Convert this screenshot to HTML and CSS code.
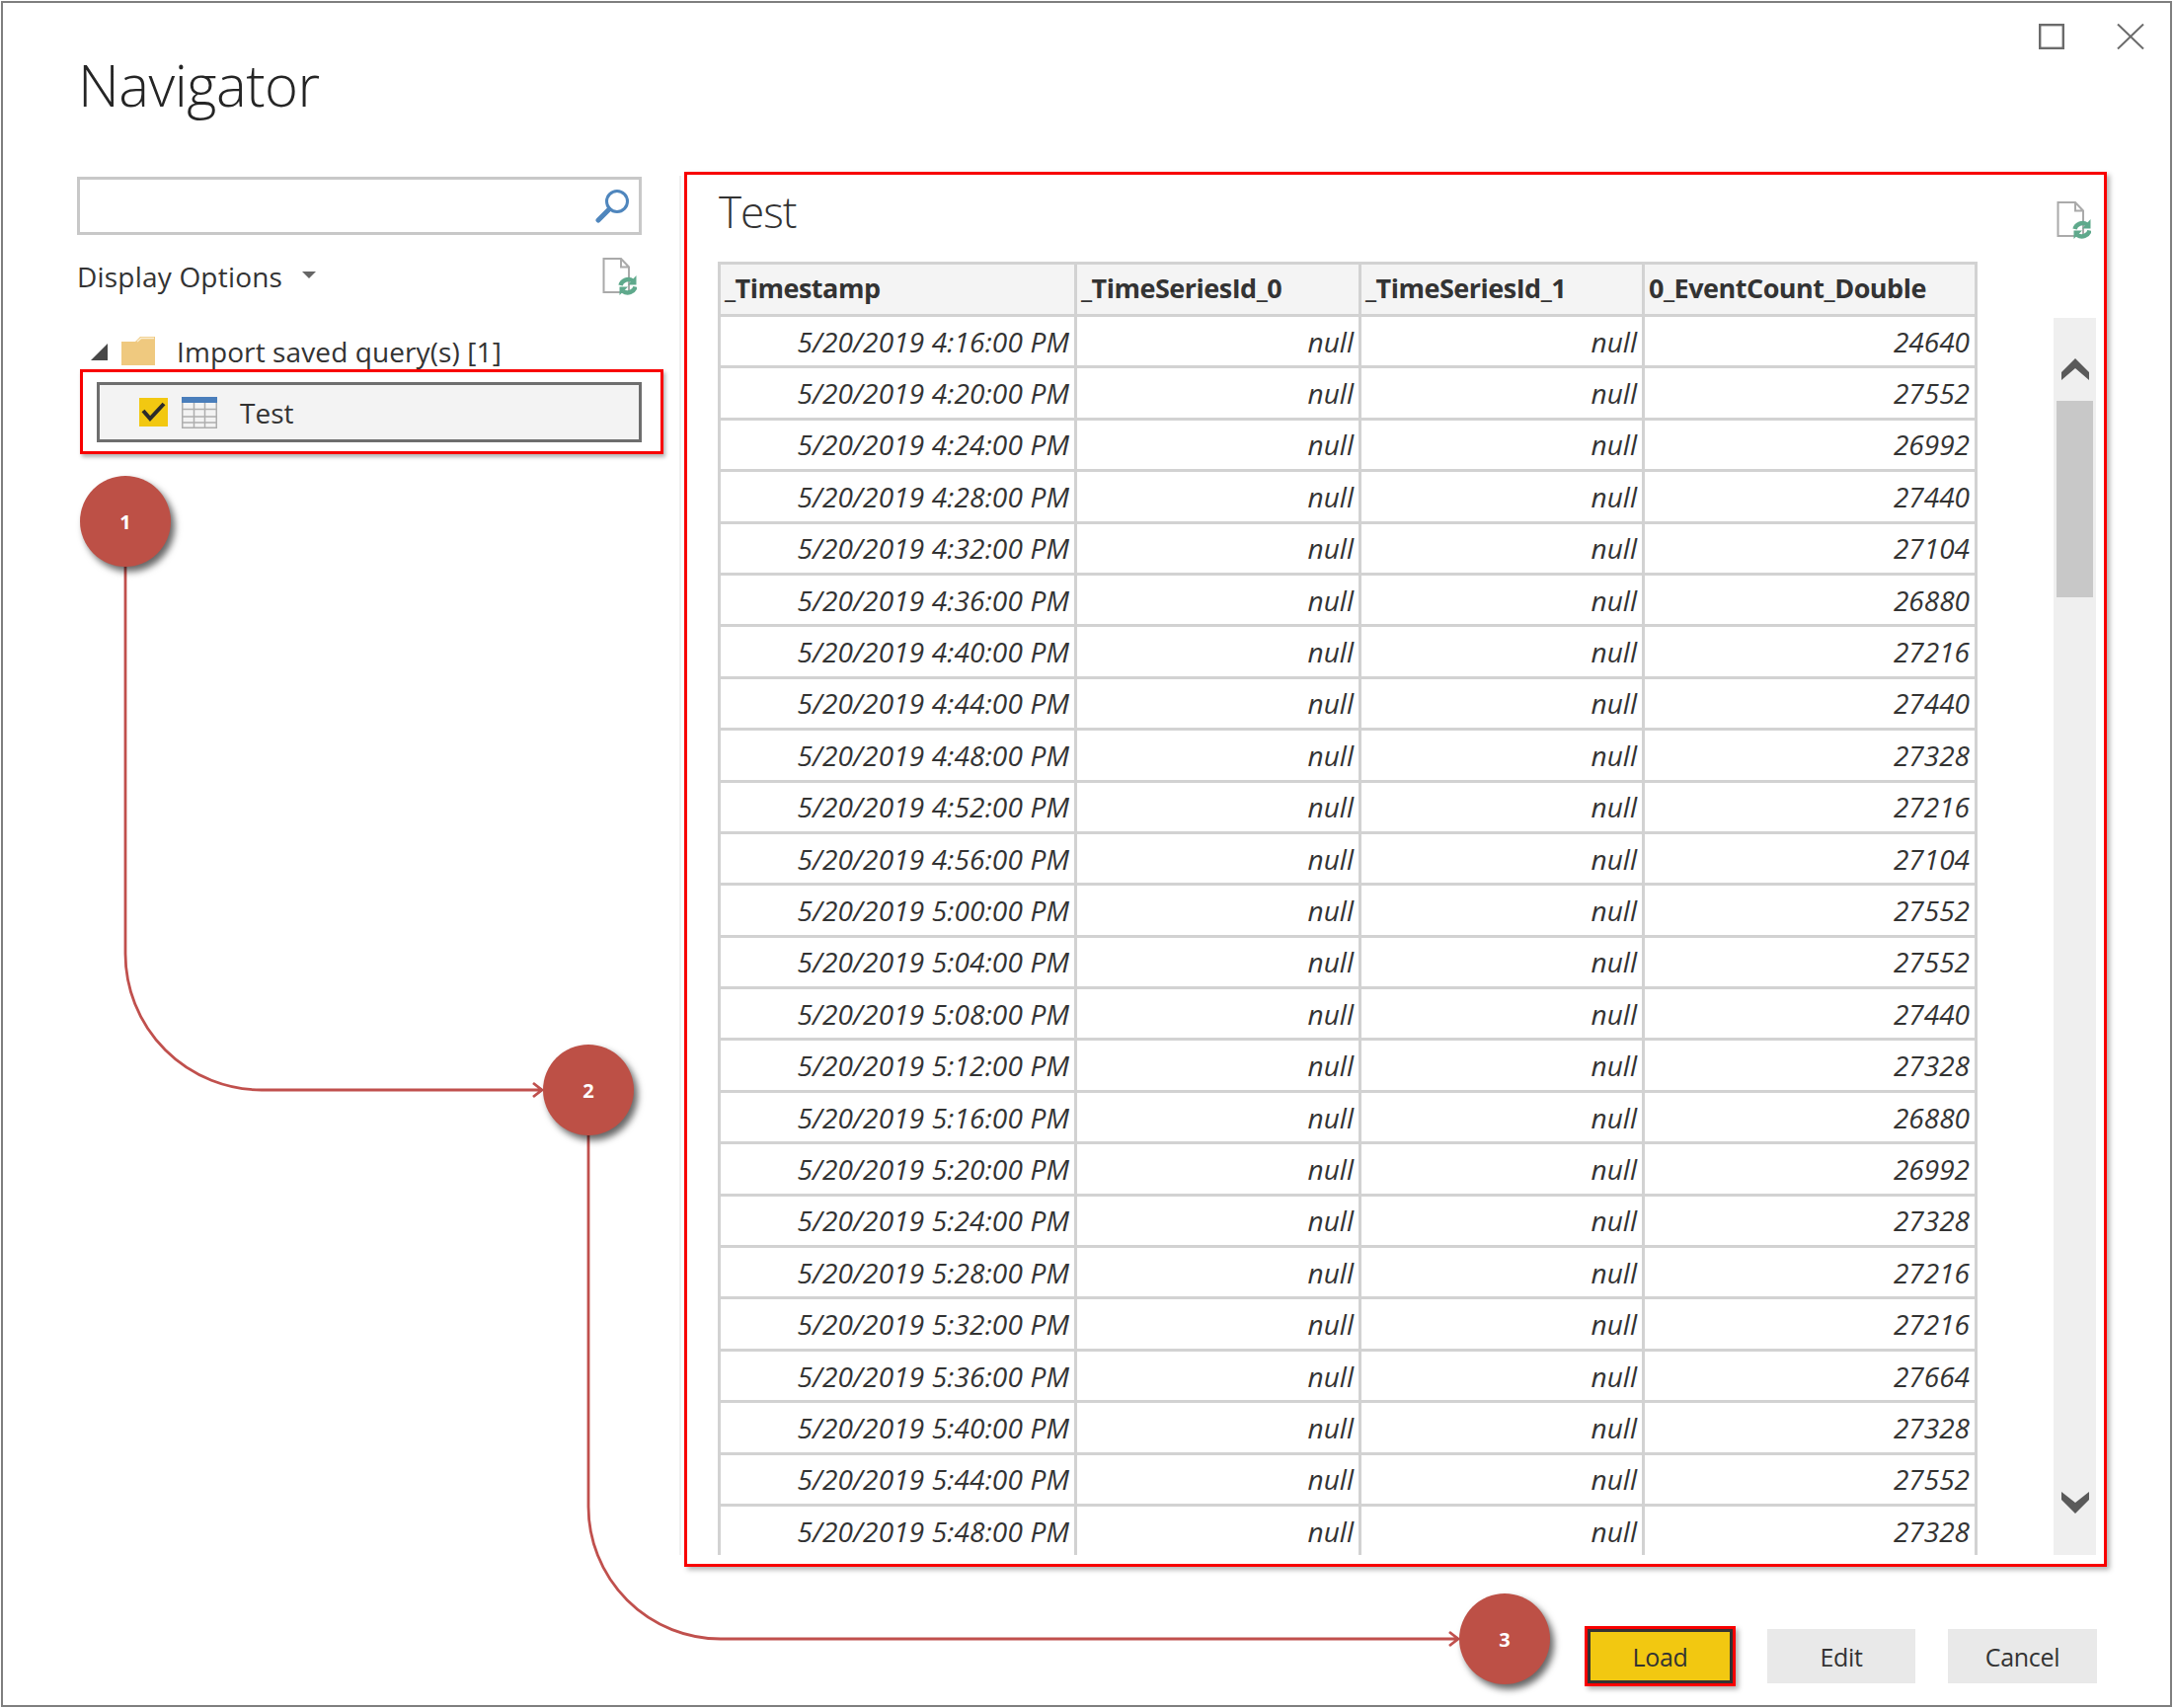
FILE: index.html
```html
<!DOCTYPE html>
<html lang="en">
<head>
  <meta charset="UTF-8">
  <title>Navigator</title>
  <link rel="stylesheet" href="styles.css">
</head>
<body>
  <div class="dialog">
    <div class="window-controls">
      <svg class="win-icon" width="26" height="26" viewBox="0 0 26 26"><rect x="1.2" y="1.2" width="23.6" height="23.6" fill="none" stroke="#6b6b6b" stroke-width="2.4"/></svg>
      <svg class="win-icon" width="28" height="26" viewBox="0 0 28 26"><path d="M1 0.5 L27 25.5 M27 0.5 L1 25.5" fill="none" stroke="#6b6b6b" stroke-width="2"/></svg>
    </div>
    <h1 class="nav-title">Navigator</h1>

    <div class="content">
      <div class="sidebar">
        <div class="search-box">
          <svg width="35" height="35" viewBox="0 0 35 35"><circle cx="22" cy="13" r="10.5" fill="none" stroke="#4f86bd" stroke-width="3"/><path d="M14 21 L3 32" fill="none" stroke="#4f86bd" stroke-width="5" stroke-linecap="round"/></svg>
        </div>
        <div class="options-row">
          <span class="options-label">Display Options</span>
          <span class="caret"></span>
          <svg class="refresh-icon" width="35" height="38" viewBox="0 0 35 38"><use href="#doc-refresh"/></svg>
        </div>
        <div class="tree-folder">
          <span class="tree-arrow"></span>
          <svg width="35" height="30" viewBox="0 0 35 30"><path d="M0 5 L14 5 L19 0 L34 0 L34 29 L0 29 Z" fill="#efc97f"/><path d="M16 5 L20 1.5 L33 1.5" fill="none" stroke="#fbeed2" stroke-width="1.5"/></svg>
          <span class="folder-name">Import saved query(s) [1]</span>
        </div>
        <div class="tree-highlight">
          <div class="tree-item">
            <span class="check">
              <svg width="29" height="29" viewBox="0 0 29 29"><path d="M4 13 L11 21 L25 6" fill="none" stroke="#2b2b2b" stroke-width="4"/></svg>
            </span>
            <svg class="table-icon" width="36" height="32" viewBox="0 0 36 32">
              <rect x="0" y="0" width="36" height="6" fill="#4a7ebb"/>
              <path d="M0.75 6 V31.25 H35.25 V6 M0.75 12.5 H35.25 M0.75 20 H35.25 M0.75 26 H35.25 M12.5 6 V31 M23.5 6 V31" fill="none" stroke="#aeaeae" stroke-width="1.5"/>
            </svg>
            <span class="item-name">Test</span>
          </div>
        </div>
      </div>

      <div class="preview">
        <div class="preview-head">
          <h2 class="preview-title">Test</h2>
          <svg class="refresh-icon" width="35" height="38" viewBox="0 0 35 38"><use href="#doc-refresh"/></svg>
        </div>
        <div class="preview-body">
          <div class="data-table">
            <div class="row head"><div>_Timestamp</div><div>_TimeSeriesId_0</div><div>_TimeSeriesId_1</div><div>0_EventCount_Double</div></div>
            <div class="row"><div>5/20/2019 4:16:00 PM</div><div>null</div><div>null</div><div>24640</div></div>
            <div class="row"><div>5/20/2019 4:20:00 PM</div><div>null</div><div>null</div><div>27552</div></div>
            <div class="row"><div>5/20/2019 4:24:00 PM</div><div>null</div><div>null</div><div>26992</div></div>
            <div class="row"><div>5/20/2019 4:28:00 PM</div><div>null</div><div>null</div><div>27440</div></div>
            <div class="row"><div>5/20/2019 4:32:00 PM</div><div>null</div><div>null</div><div>27104</div></div>
            <div class="row"><div>5/20/2019 4:36:00 PM</div><div>null</div><div>null</div><div>26880</div></div>
            <div class="row"><div>5/20/2019 4:40:00 PM</div><div>null</div><div>null</div><div>27216</div></div>
            <div class="row"><div>5/20/2019 4:44:00 PM</div><div>null</div><div>null</div><div>27440</div></div>
            <div class="row"><div>5/20/2019 4:48:00 PM</div><div>null</div><div>null</div><div>27328</div></div>
            <div class="row"><div>5/20/2019 4:52:00 PM</div><div>null</div><div>null</div><div>27216</div></div>
            <div class="row"><div>5/20/2019 4:56:00 PM</div><div>null</div><div>null</div><div>27104</div></div>
            <div class="row"><div>5/20/2019 5:00:00 PM</div><div>null</div><div>null</div><div>27552</div></div>
            <div class="row"><div>5/20/2019 5:04:00 PM</div><div>null</div><div>null</div><div>27552</div></div>
            <div class="row"><div>5/20/2019 5:08:00 PM</div><div>null</div><div>null</div><div>27440</div></div>
            <div class="row"><div>5/20/2019 5:12:00 PM</div><div>null</div><div>null</div><div>27328</div></div>
            <div class="row"><div>5/20/2019 5:16:00 PM</div><div>null</div><div>null</div><div>26880</div></div>
            <div class="row"><div>5/20/2019 5:20:00 PM</div><div>null</div><div>null</div><div>26992</div></div>
            <div class="row"><div>5/20/2019 5:24:00 PM</div><div>null</div><div>null</div><div>27328</div></div>
            <div class="row"><div>5/20/2019 5:28:00 PM</div><div>null</div><div>null</div><div>27216</div></div>
            <div class="row"><div>5/20/2019 5:32:00 PM</div><div>null</div><div>null</div><div>27216</div></div>
            <div class="row"><div>5/20/2019 5:36:00 PM</div><div>null</div><div>null</div><div>27664</div></div>
            <div class="row"><div>5/20/2019 5:40:00 PM</div><div>null</div><div>null</div><div>27328</div></div>
            <div class="row"><div>5/20/2019 5:44:00 PM</div><div>null</div><div>null</div><div>27552</div></div>
            <div class="row"><div>5/20/2019 5:48:00 PM</div><div>null</div><div>null</div><div>27328</div></div>
          </div>
          <div class="scrollbar">
            <svg class="scroll-up" width="28" height="23" viewBox="0 0 28 23"><polygon points="0,14 14,0 28,14 28,22 14,10 0,22" fill="#5a5a5a"/></svg>
            <div class="scroll-thumb"></div>
            <svg class="scroll-down" width="28" height="22" viewBox="0 0 28 22"><polygon points="0,0 14,11 28,0 28,8 14,22 0,8" fill="#5a5a5a"/></svg>
          </div>
        </div>
      </div>
    </div>

    <div class="footer">
      <button type="button" class="btn btn-load">Load</button>
      <button type="button" class="btn">Edit</button>
      <button type="button" class="btn btn-cancel">Cancel</button>
    </div>

    <!-- annotations drawn over the dialog -->
    <svg class="connectors" width="2202" height="1730" viewBox="0 0 2202 1730">
      <defs>
        <g id="doc-refresh">
          <path d="M1.5 1 H19 L27 9.5 V35 H1.5 Z M19 1 V9.5 H27" fill="#fff" stroke="#aaaaaa" stroke-width="2"/>
          <path d="M18.5 28 A8 7.5 0 0 1 31 23.5" fill="none" stroke="#5fa98c" stroke-width="4.4"/>
          <path d="M34.5 18 V27.5 H26 Z" fill="#5fa98c"/>
          <path d="M33.5 29.5 A8 7.5 0 0 1 21 34" fill="none" stroke="#5fa98c" stroke-width="4.4"/>
          <path d="M17.5 38 V29.5 H26 Z" fill="#5fa98c"/>
        </g>
      </defs>
      <path d="M127 574 V966 A138 138 0 0 0 265 1104 H549 M540 1097 L549 1104 L540 1111" />
      <path d="M596 1150 V1526 A134 134 0 0 0 730 1660 H1477 M1468 1653 L1477 1660 L1468 1667" />
    </svg>
    <div class="step step-1">1</div>
    <div class="step step-2">2</div>
    <div class="step step-3">3</div>
  </div>
</body>
</html>
```

FILE: styles.css
```css
* {
  box-sizing: border-box;
}
body {
  margin: 0;
  background-color: #ffffff;
  font-family: "Open Sans", "Noto Sans", sans-serif;
  color: #333333;
}
.dialog {
  position: relative;
  width: 2199px;
  height: 1728px;
  margin: 1px 2px 1px 1px;
  border: 2px solid #7f7f7f;
  padding-top: 21px;
  display: flex;
  flex-direction: column;
}

/* title area */
.window-controls {
  display: flex;
  justify-content: flex-end;
  gap: 53px;
  height: 26px;
  padding-right: 26px;
}
.nav-title {
  margin: 0;
  height: 125px;
  padding: 0 0 0 76px;
  font-size: 58px;
  font-weight: 300;
  line-height: 72px;
  letter-spacing: -0.5px;
  color: #252525;
}

.content {
  display: flex;
  height: 1410px;
}

/* left pane */
.sidebar {
  width: 691px;
  padding-left: 75px;
}
.search-box {
  width: 572px;
  height: 59px;
  margin-top: 4px;
  border: 3px solid #c8c8c8;
  display: flex;
  justify-content: flex-end;
  align-items: center;
  padding-right: 9px;
}
.options-row {
  display: flex;
  align-items: center;
  width: 572px;
  height: 60px;
  margin-top: 12px;
}
.options-label {
  font-size: 28px;
  letter-spacing: 0.2px;
}
.caret {
  width: 0;
  height: 0;
  margin-left: 20px;
  margin-top: -3px;
  border-left: 7px solid transparent;
  border-right: 7px solid transparent;
  border-top: 7px solid #666666;
}
.options-row .refresh-icon {
  margin-left: auto;
  margin-right: 5px;
}
.tree-folder {
  display: flex;
  align-items: center;
  height: 30px;
  margin-top: 31px;
  padding-left: 14px;
}
.tree-arrow {
  width: 0;
  height: 0;
  margin-right: 14px;
  border-bottom: 17px solid #474747;
  border-left: 17px solid transparent;
}
.folder-name {
  margin-left: 21px;
  font-size: 28px;
  letter-spacing: 0.1px;
  white-space: nowrap;
}
.tree-highlight {
  width: 591px;
  height: 86px;
  margin: 3px 0 0 3px;
  padding: 10px 19px 9px 14px;
  border: 3px solid #f80000;
  box-shadow: 2px 3px 4px rgba(0, 0, 0, 0.3);
}
.tree-item {
  display: flex;
  align-items: center;
  height: 61px;
  padding-left: 40px;
  background: #f3f3f3;
  border: 3px solid #6e6e6e;
}
.check {
  width: 29px;
  height: 29px;
  background: #f2c811;
}
.table-icon {
  margin-left: 14px;
}
.item-name {
  margin-left: 23px;
  font-size: 28px;
}

/* right pane */
.preview {
  position: relative;
  flex: none;
  width: 1441px;
  height: 1413px;
  margin: -1px 0 0 -1px;
  padding: 0 8px 9px 31px;
  border: 3px solid #f80000;
  box-shadow: 3px 3px 5px rgba(0, 0, 0, 0.3);
}
.preview::before {
  content: "";
  position: absolute;
  left: -8px;
  top: 1px;
  bottom: 9px;
  width: 2px;
  background: #f0f0f0;
}
.preview-head {
  display: flex;
  justify-content: space-between;
  height: 88px;
  padding: 20px 5px 0 1px;
}
.preview-head .refresh-icon {
  margin-top: 7px;
}
.preview-title {
  margin: 0;
  font-size: 44px;
  font-weight: 300;
  line-height: 34px;
  letter-spacing: -1px;
  color: #333333;
}
.preview-body {
  display: flex;
  height: 1310px;
}
.data-table {
  width: 1276px;
  height: 1310px;
  overflow: hidden;
  border-left: 3px solid #d2d2d2;
  border-top: 3px solid #d2d2d2;
}
.row {
  display: grid;
  grid-template-columns: 361px 288px 287px 337px;
  height: 52.4px;
  font-size: 28px;
  font-style: italic;
}
.row div {
  display: flex;
  align-items: center;
  justify-content: flex-end;
  padding-right: 5px;
  border-right: 3px solid #d2d2d2;
  border-bottom: 3px solid #d2d2d2;
}
.row div:first-child {
  letter-spacing: 0.15px;
}
.row.head {
  height: 53px;
  background: #f4f4f4;
  font-size: 27px;
  font-style: normal;
  font-weight: 700;
  letter-spacing: -0.5px;
}
.row.head div {
  justify-content: flex-start;
  padding: 0 0 4px 4px;
  letter-spacing: -0.5px;
}
.scrollbar {
  width: 43px;
  height: 1253px;
  margin: 57px 0 0 77px;
  padding: 0 3px;
  background: #efefef;
  display: flex;
  flex-direction: column;
  align-items: center;
}
.scrollbar svg {
  flex: none;
}
.scroll-up {
  margin-top: 41px;
}
.scroll-thumb {
  width: 37px;
  height: 199px;
  margin-top: 20px;
  background: #c8c8c8;
}
.scroll-down {
  margin-top: auto;
  margin-bottom: 42px;
}

/* buttons */
.footer {
  display: flex;
  justify-content: flex-end;
  gap: 33px;
  margin-top: 65px;
  padding-right: 74px;
}
.btn {
  width: 150px;
  height: 55px;
  border: none;
  background: #e9e9e9;
  color: #333333;
  font-family: inherit;
  font-size: 25px;
  letter-spacing: -0.3px;
}
.btn-cancel {
  width: 151px;
}
.btn-load {
  width: 147px;
  margin-right: 2px;
  background: #f2c811;
  border: 3px solid #333333;
  box-shadow: 0 0 0 3px #f80000, 3px 3px 5px 3px rgba(0, 0, 0, 0.3);
}

/* annotations */
.connectors {
  position: absolute;
  left: -3px;
  top: -3px;
  pointer-events: none;
}
.connectors > path {
  fill: none;
  stroke: #c0504d;
  stroke-width: 2.8;
}
.step {
  position: absolute;
  width: 92px;
  height: 92px;
  border-radius: 50%;
  background: #bd5046;
  color: #ffffff;
  font-size: 20px;
  font-weight: 700;
  display: flex;
  align-items: center;
  justify-content: center;
  box-shadow: 4px 5px 7px rgba(0, 0, 0, 0.6);
}
.step-1 {
  left: 78px;
  top: 479px;
}
.step-2 {
  left: 547px;
  top: 1055px;
}
.step-3 {
  left: 1475px;
  top: 1611px;
}
```
